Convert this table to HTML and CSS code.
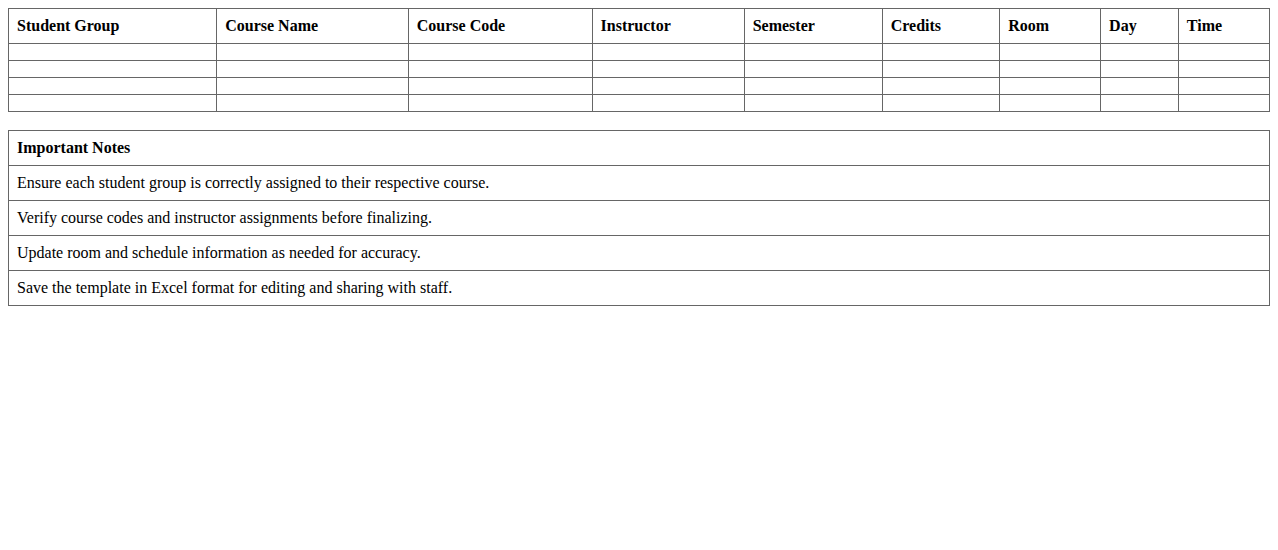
FILE: index.html
```html
<!DOCTYPE html>
<html>
<head>
<meta charset="utf-8">
<link rel="stylesheet" href="styles.css">
</head>
<body>
<table class="grid schedule">
  <thead>
    <tr>
      <th>Student Group</th>
      <th>Course Name</th>
      <th>Course Code</th>
      <th>Instructor</th>
      <th>Semester</th>
      <th>Credits</th>
      <th>Room</th>
      <th>Day</th>
      <th>Time</th>
    </tr>
  </thead>
  <tbody>
    <tr><td></td><td></td><td></td><td></td><td></td><td></td><td></td><td></td><td></td></tr>
    <tr><td></td><td></td><td></td><td></td><td></td><td></td><td></td><td></td><td></td></tr>
    <tr><td></td><td></td><td></td><td></td><td></td><td></td><td></td><td></td><td></td></tr>
    <tr><td></td><td></td><td></td><td></td><td></td><td></td><td></td><td></td><td></td></tr>
  </tbody>
</table>
<table class="grid notes">
  <thead>
    <tr><th>Important Notes</th></tr>
  </thead>
  <tbody>
    <tr><td>Ensure each student group is correctly assigned to their respective course.</td></tr>
    <tr><td>Verify course codes and instructor assignments before finalizing.</td></tr>
    <tr><td>Update room and schedule information as needed for accuracy.</td></tr>
    <tr><td>Save the template in Excel format for editing and sharing with staff.</td></tr>
  </tbody>
</table>
</body>
</html>
```
FILE: styles.css
```css
body {
  margin: 8px;
  font-family: "Liberation Serif", "Times New Roman", serif;
  font-size: 16px;
  color: #000;
  background: #fff;
}
.grid {
  width: 100%;
  border-collapse: collapse;
}
.grid th,
.grid td {
  border: 1px solid #666;
  padding: 8px;
  text-align: left;
}
.grid th {
  font-weight: bold;
}
.schedule {
  margin-bottom: 18px;
}
```
